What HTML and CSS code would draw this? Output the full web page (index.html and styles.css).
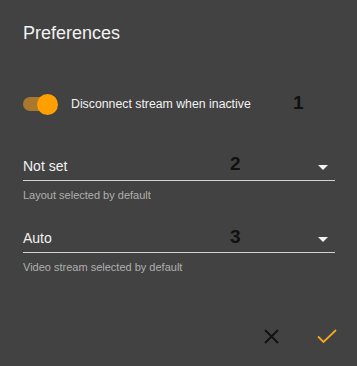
FILE: index.html
```html
<!DOCTYPE html>
<html lang="en">
<head>
    <meta charset="UTF-8">
    <meta name="viewport" content="width=device-width, initial-scale=1.0">
    <title>Preferences</title>
    <link rel="stylesheet" href="styles.css">
</head>
<body>
    <div class="dialog">
        <h1 class="title">Preferences</h1>

        <div class="switch-row">
            <span class="switch">
                <span class="track"></span>
                <span class="thumb"></span>
            </span>
            <span class="switch-label">Disconnect stream when inactive</span>
        </div>

        <div class="field">
            <div class="select">
                <span class="value">Not set</span>
                <span class="arrow"></span>
            </div>
            <p class="helper">Layout selected by default</p>
        </div>

        <div class="field second">
            <div class="select">
                <span class="value">Auto</span>
                <span class="arrow"></span>
            </div>
            <p class="helper">Video stream selected by default</p>
        </div>

        <div class="actions">
            <button class="icon-btn" aria-label="Cancel">
                <svg width="15" height="15" viewBox="0 0 15 15">
                    <path d="M1 1L14 14M14 1L1 14" stroke="#111" stroke-width="1.8" fill="none"/>
                </svg>
            </button>
            <button class="icon-btn" aria-label="Save">
                <svg width="20" height="15" viewBox="0 0 20 15">
                    <path d="M1 7.5L6.5 13L19 1" stroke="#f5a623" stroke-width="1.8" fill="none"/>
                </svg>
            </button>
        </div>

        <span class="marker m1">1</span>
        <span class="marker m2">2</span>
        <span class="marker m3">3</span>
    </div>
</body>
</html>
```

FILE: styles.css
```css
body, h1, p, button {
    margin: 0;
    padding: 0;
    font-family: 'Liberation Sans', Arial, sans-serif;
}

body {
    background: #424242;
    width: 357px;
    height: 366px;
    overflow: hidden;
}

.dialog {
    position: relative;
    padding: 22px 22px 0 23px;
}

.title {
    font-size: 18px;
    line-height: 22px;
    font-weight: normal;
    color: #f2f2f2;
}

.switch-row {
    display: flex;
    align-items: center;
    height: 20px;
    margin-top: 50px;
}

.switch {
    position: relative;
    width: 35px;
    height: 20px;
    margin-right: 13px;
}

.switch .track {
    position: absolute;
    left: 0;
    top: 3px;
    width: 34px;
    height: 14px;
    border-radius: 7px;
    background: #a7782d;
}

.switch .thumb {
    position: absolute;
    left: 14px;
    top: 0;
    width: 21px;
    height: 21px;
    border-radius: 50%;
    background: #ffa000;
}

.switch-label {
    font-size: 12.3px;
    line-height: 20px;
    color: #f2f2f2;
}

.field {
    margin-top: 42px;
}

.field.second {
    margin-top: 26px;
}

.select {
    display: flex;
    align-items: center;
    justify-content: space-between;
    height: 20px;
    padding-bottom: 4px;
    border-bottom: 1px solid #d0d0d0;
}

.select .value {
    font-size: 14px;
    line-height: 20px;
    color: #f2f2f2;
}

.select .arrow {
    width: 0;
    height: 0;
    margin-right: 7px;
    margin-top: 2px;
    border-left: 5px solid transparent;
    border-right: 5px solid transparent;
    border-top: 5px solid #f2f2f2;
}

.helper {
    margin-top: 7px;
    font-size: 11px;
    line-height: 14px;
    color: #b0b0b0;
}

.actions {
    display: flex;
    justify-content: flex-end;
    gap: 20px;
    margin-top: 44px;
    margin-right: -10px;
}

.icon-btn {
    width: 36px;
    height: 36px;
    border: none;
    background: none;
    display: flex;
    align-items: center;
    justify-content: center;
    cursor: pointer;
}

.marker {
    position: absolute;
    font-size: 19px;
    line-height: 19px;
    font-weight: bold;
    color: #111;
}

.m1 { left: 293px; top: 93px; }
.m2 { left: 230px; top: 154px; }
.m3 { left: 230px; top: 227px; }
```
